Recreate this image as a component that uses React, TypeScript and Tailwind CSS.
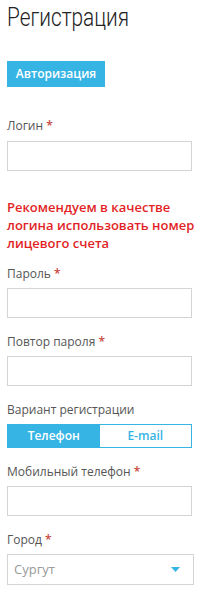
import React from "react";

const font = { fontFamily: '"Open Sans", "Noto Sans", sans-serif' };

function Label({ text, className = "" }: { text: string; className?: string }) {
  return (
    <div className={`text-[12px] leading-[16px] text-[#555] ${className}`}>
      {text} <span className="text-[#c9463d] font-semibold">*</span>
    </div>
  );
}

function Input({ className = "" }: { className?: string }) {
  return (
    <div className={`h-[30px] w-[185px] border border-[#d4d4d4] bg-white ${className}`} />
  );
}

export default function App() {
  return (
    <div className="w-[207px] h-[600px] bg-white px-[7px] overflow-hidden" style={font}>
      <h1
        className="text-[26px] leading-[34px] font-light text-[#222] origin-left scale-x-[0.8] whitespace-nowrap"
        style={{ fontFamily: 'Roboto, "Open Sans", sans-serif' }}
      >
        Регистрация
      </h1>
      <button className="mt-[27px] w-[98px] h-[26px] bg-[#36b4e4] text-white text-[12px] font-semibold flex items-center justify-center">
        Авторизация
      </button>

      <Label text="Логин" className="mt-[31px]" />
      <Input className="mt-[7px]" />

      <div className="mt-[27px] text-[13px] leading-[18px] font-semibold text-[#e21f26]">
        Рекомендуем в качестве логина использовать номер лицевого счета
      </div>

      <Label text="Пароль" className="mt-[14px]" />
      <Input className="mt-[6px]" />

      <Label text="Повтор пароля" className="mt-[16px]" />
      <Input className="mt-[6px]" />

      <div className="mt-[16px] text-[12px] leading-[16px] text-[#555]">Вариант регистрации</div>
      <div className="mt-[6px] w-[185px] h-[24px] border border-[#36b4e4] flex text-[12px] font-semibold">
        <div className="w-1/2 bg-[#36b4e4] text-white flex items-center justify-center">Телефон</div>
        <div className="w-1/2 bg-white text-[#36b4e4] flex items-center justify-center">E-mail</div>
      </div>

      <Label text="Мобильный телефон" className="mt-[16px]" />
      <Input className="mt-[6px]" />

      <Label text="Город" className="mt-[16px]" />
      <div className="mt-[6px] w-[187px] h-[31px] border border-[#d4d4d4] flex items-center justify-between pl-[6px] pr-[13px]">
        <span className="text-[13px] text-[#9a9a9a]">Сургут</span>
        <svg width="9" height="5" viewBox="0 0 9 5">
          <polygon points="0,0 9,0 4.5,5" fill="#36b4e4" />
        </svg>
      </div>
    </div>
  );
}
